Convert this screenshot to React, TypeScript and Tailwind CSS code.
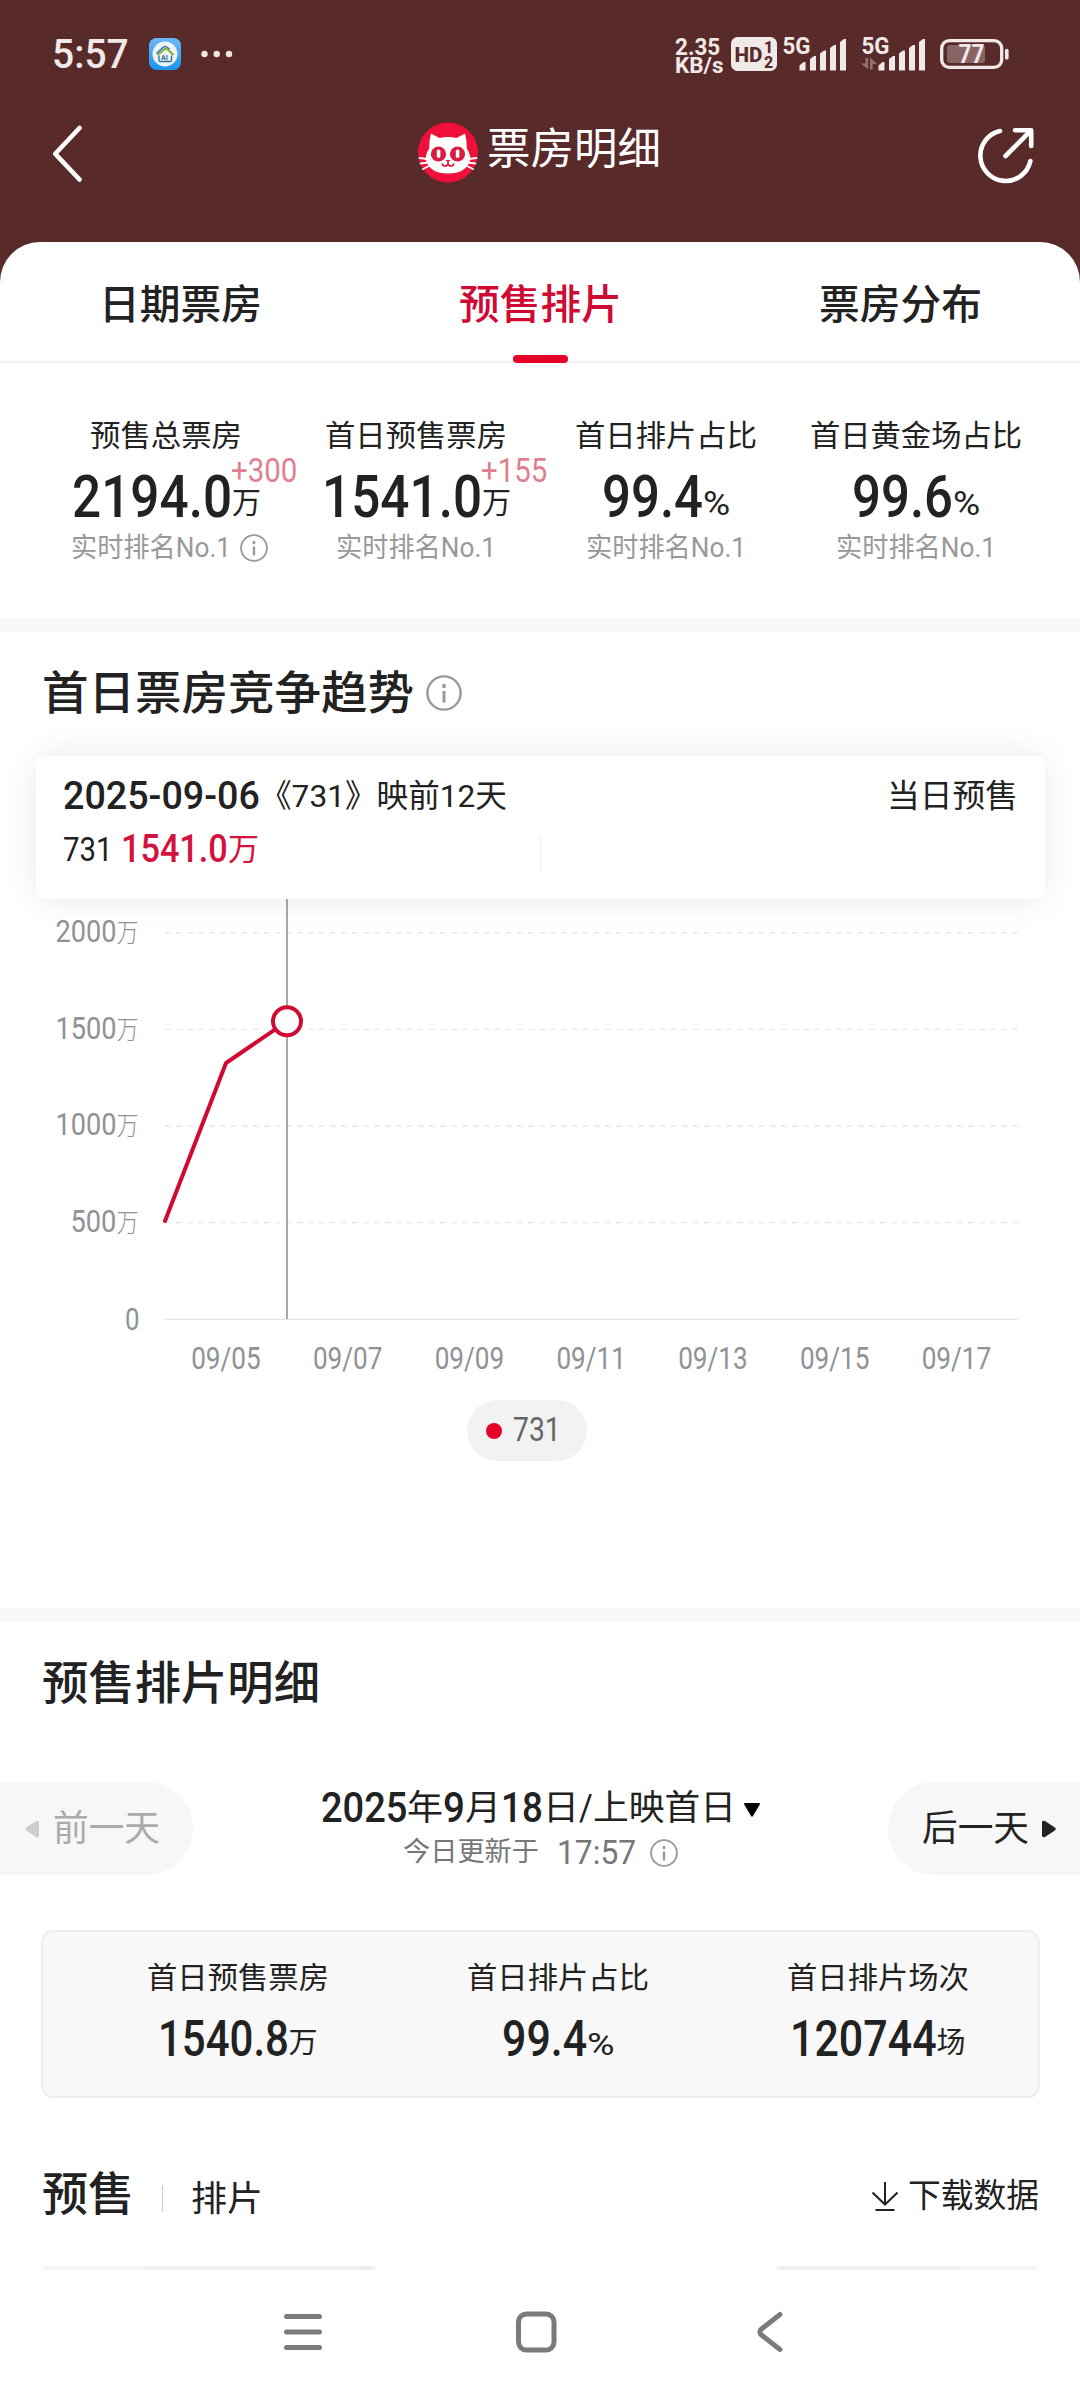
import React, { useLayoutEffect, useRef, useState } from "react";

/* Text squeezed or stretched horizontally so that it fills the width of its box. */
function Fit({ className, children }: { className: string; children: React.ReactNode }) {
  const outer = useRef<HTMLSpanElement>(null);
  const inner = useRef<HTMLSpanElement>(null);
  const [scale, setScale] = useState(1);
  useLayoutEffect(() => {
    if (outer.current && inner.current && inner.current.offsetWidth > 0) {
      setScale(outer.current.clientWidth / inner.current.offsetWidth);
    }
  }, []);
  return (
    <span ref={outer} className={`flex shrink-0 leading-none ${className}`}>
      <span
        ref={inner}
        className="block shrink-0 origin-left whitespace-nowrap"
        style={{ transform: `scaleX(${scale})` }}
      >
        {children}
      </span>
    </span>
  );
}

function Info({ className }: { className: string }) {
  return (
    <svg viewBox="0 0 36 36" fill="none" stroke="currentColor" className={`shrink-0 ${className}`}>
      <circle cx="18" cy="18" r="16.6" strokeWidth="2.4" />
      <path d="M18 16v11.5" strokeWidth="3" />
      <path d="M18 9v4" strokeWidth="3.2" />
    </svg>
  );
}

function Signal({ data }: { data?: boolean }) {
  return (
    <svg viewBox="0 -6 66 48" className="h-12 w-[66px] shrink-0 fill-[#f1e8e8]">
      <text x="0.500" y="17.500" fontSize="23" fontWeight="700" textLength="28" lengthAdjust="spacingAndGlyphs">
        5G
      </text>
      {data && (
        <g className="fill-[#937272]">
          <path d="M4.500 22h2.600v11.500L0 27.500h4.500z" />
          <path d="M9 33.500h2.600V28H16l-7-6.500z" />
        </g>
      )}
      <path d="M17.500 34.500v-5l4-3.500h2v8.500z" />
      <path d="M28 34.500V23l4-3h2v14.500z" />
      <path d="M38 34.500V17.500l4-3h2v20z" />
      <path d="M48 34.500V12l4-3h2v25.500z" />
      <path d="M58 34.500V6l4-3h2v31.500z" />
    </svg>
  );
}

function StatusBar() {
  return (
    <div className="flex h-[108px] items-center text-[#f1e8e8]">
      <Fit className="ml-[52px] w-[77px] text-[41px] font-medium">5:57</Fit>
      <svg viewBox="0 0 32 32" className="ml-5 h-8 w-8">
        <defs>
          <linearGradient id="app" x1="0" y1="0" x2="0" y2="1">
            <stop offset="0" stopColor="#6db9f7" />
            <stop offset="1" stopColor="#1b95ee" />
          </linearGradient>
        </defs>
        <rect width="32" height="32" rx="7.500" fill="url(#app)" />
        <circle cx="16" cy="16" r="12.500" fill="#eef4f4" />
        <path d="M7.500 15.500l7-6.500q1.500-1 3 0l3 2.200" fill="none" stroke="#2a6fa0" strokeWidth="1.500" />
        <path d="M8.500 17l7-5.800q1.500-1 3 0L24.500 17" fill="none" stroke="#7fae3c" strokeWidth="2" />
        <path d="M10 17.500v5q0 1 1 1h10.500q1 0 1-1v-5" fill="none" stroke="#2a6fa0" strokeWidth="1.300" />
        <text x="12" y="21.800" fontSize="7" fontWeight="700" fill="#2a6fa0">
          AI
        </text>
      </svg>
      <svg viewBox="0 0 32 8" className="ml-5 h-2 w-8 fill-[#f1e8e8]">
        <circle cx="3.500" cy="4" r="3.200" />
        <circle cx="15.700" cy="4" r="3.200" />
        <circle cx="28" cy="4" r="3.200" />
      </svg>
      <div className="ml-[442px] flex flex-col gap-px pt-1">
        <Fit className="h-[18px] w-[45px] items-center text-[24px] font-bold">2.35</Fit>
        <Fit className="h-[18px] w-[49px] items-center text-[22px] font-bold">KB/s</Fit>
      </div>
      <svg viewBox="0 0 46 34" className="ml-[7px] h-[34px] w-[46px] shrink-0">
        <rect width="46" height="34" rx="6.500" fill="#f1e8e8" />
        <g fill="#582a2a" fontWeight="800">
          <text x="3.500" y="24.500" fontSize="21" textLength="28" lengthAdjust="spacingAndGlyphs">
            HD
          </text>
          <text x="33" y="15.500" fontSize="16">
            1
          </text>
          <text x="33" y="30.500" fontSize="16">
            2
          </text>
        </g>
      </svg>
      <div className="ml-[5px] flex gap-[13px]">
        <Signal />
        <Signal data />
      </div>
      <svg viewBox="0 0 70 32" className="ml-[12.500px] h-8 w-[70px] shrink-0">
        <rect x="1.700" y="2.700" width="60" height="26.600" rx="7.500" fill="none" stroke="#f1e8e8" strokeWidth="3.300" />
        <rect x="7" y="7" width="38" height="18" rx="3" fill="#886464" />
        <path d="M66.800 12.500v7.500" stroke="#f1e8e8" strokeWidth="3.600" strokeLinecap="round" />
        <text x="18.500" y="25" fontSize="25.500" fontWeight="700" fill="#f1e8e8" textLength="26" lengthAdjust="spacingAndGlyphs">
          77
        </text>
      </svg>
    </div>
  );
}

function CatLogo() {
  return (
    <svg viewBox="0 0 60 60" className="h-[61px] w-[60px]">
      <circle cx="30" cy="30" r="30" fill="#ee1039" />
      <path
        d="M13 11l8.500 4.500q8.500-2 17 0L47 11q2 7 1.800 15Q53 32 52 38q-4 13-22 13T8 38q-1-6 3.200-12Q11 18 13 11z"
        fill="#fff"
      />
      <g stroke="#fff" strokeWidth="1.800" strokeLinecap="round">
        <path d="M1.500 35.500l8 1M2.500 41l8-1M5 46.500l7-3.500M58.500 35.500l-8 1M57.500 41l-8-1M55 46.500L48 43" />
      </g>
      <circle cx="20.500" cy="31.500" r="7.600" fill="#d81c40" />
      <circle cx="39.500" cy="31.500" r="7.600" fill="#d81c40" />
      <rect x="18.800" y="27" width="3.600" height="8.500" rx="1.800" fill="#fff" />
      <rect x="37.800" y="27" width="3.600" height="8.500" rx="1.800" fill="#fff" />
      <path d="M27.500 37.500h5L30 40z" fill="#d81c40" />
      <path d="M30 39.500v2q-1.500 2.500-3.500 2t-2.500-2.500M30 41.500q1.500 2.500 3.500 2t2.500-2.500" fill="none" stroke="#d81c40" strokeWidth="1.700" />
    </svg>
  );
}

function TitleBar() {
  return (
    <div className="flex h-[134px] items-start pt-[14px] text-white">
      <svg viewBox="0 0 30 58" fill="none" stroke="currentColor" className="ml-[52px] mt-[3px] h-[58px] w-[30px]">
        <path d="M27.500 3L3.300 28.800 27.500 54.500" strokeWidth="4.600" strokeLinecap="round" strokeLinejoin="round" />
      </svg>
      <div className="ml-[336px]">
        <CatLogo />
      </div>
      <Fit className="ml-[9px] mt-[6px] w-[174px] text-[43px]">票房明细</Fit>
      <svg viewBox="0 0 58 58" fill="none" stroke="currentColor" className="ml-[315px] mt-[4px] h-[58px] w-[58px]">
        <g strokeWidth="4.600" strokeLinecap="round" strokeLinejoin="round">
          <path d="M24 5A25.300 25.300 0 1 0 54.400 35" />
          <path d="M29.500 30L55 4.500M39 4.300h16.200V20" />
        </g>
      </svg>
    </div>
  );
}

function Tabs() {
  return (
    <div className="grid h-[121px] grid-cols-3 border-b-2 border-[#f1f1f1] text-[40.500px] font-medium text-[#222]">
      <div className="flex justify-center pt-[43px]">
        <Fit className="w-[163px]">日期票房</Fit>
      </div>
      <div className="relative flex justify-center pt-[43px] text-[#cf0a33]">
        <Fit className="w-[163px]">预售排片</Fit>
        <div className="absolute -bottom-0.5 left-[153px] h-2 w-[55px] rounded-full bg-[#e60029]" />
      </div>
      <div className="flex justify-center pt-[43px]">
        <Fit className="w-[163px]">票房分布</Fit>
      </div>
    </div>
  );
}

type Stat = { label: string; labelW: string; value: string; valueW: string; unit: string; unitW: string; delta?: string; info?: boolean };

const stats: Stat[] = [
  { label: "预售总票房", labelW: "w-[152px]", value: "2194.0", valueW: "w-[160px]", unit: "万", unitW: "w-[29px] text-[30px]", delta: "+300", info: true },
  { label: "首日预售票房", labelW: "w-[182px]", value: "1541.0", valueW: "w-[160px]", unit: "万", unitW: "w-[29px] text-[30px]", delta: "+155" },
  { label: "首日排片占比", labelW: "w-[182px]", value: "99.4", valueW: "w-[101px]", unit: "%", unitW: "w-[27px] text-[33px]" },
  { label: "首日黄金场占比", labelW: "w-[212px]", value: "99.6", valueW: "w-[101px]", unit: "%", unitW: "w-[27px] text-[33px]" },
];

function Stats() {
  return (
    <div className="flex h-[255px] pl-[41px] pt-[58px] text-[#222]">
      {stats.map((s) => (
        <div key={s.label} className="flex w-[250px] flex-col items-center">
          <Fit className={`text-[30px] ${s.labelW}`}>{s.label}</Fit>
          <div className="relative mt-[16px] flex h-[58px] items-center">
            <Fit className={`text-[59px] font-medium ${s.valueW}`}>{s.value}</Fit>
            <Fit className={`mt-3.5 ${s.unitW}`}>{s.unit}</Fit>
            {s.delta && (
              <Fit className="absolute left-[159px] top-[-13px] w-[66px] text-[33px] text-[#e07f91]">{s.delta}</Fit>
            )}
          </div>
          <div className="mt-[9px] flex h-[28px] items-center text-[27.500px] text-[#999]">
            {s.info && <span className="w-1.5" />}
            <Fit className="w-[160px]">实时排名No.1</Fit>
            {s.info && <Info className="ml-[9px] h-7 w-7" />}
          </div>
        </div>
      ))}
    </div>
  );
}

const yLabels: [string, number][] = [
  ["2000", 83],
  ["1500", 83],
  ["1000", 83],
  ["500", 68],
];
const days = ["09/05", "09/07", "09/09", "09/11", "09/13", "09/15", "09/17"];

function Chart() {
  return (
    <svg viewBox="0 899 1080 486" className="block h-[486px] w-full">
      {yLabels.map(([label, w], i) => (
        <g key={label}>
          <text x={138.5 - w} y={942 + i * 96.6} fontSize="32" fill="#8f9296" textLength={w} lengthAdjust="spacingAndGlyphs">
            {label}
            <tspan fontSize="26" fontWeight="300">
              万
            </tspan>
          </text>
          <path d={`M165 ${932.8 + i * 96.6}H1017.500`} stroke="#e9e9e9" strokeWidth="1.400" strokeDasharray="5.6 5.4" />
        </g>
      ))}
      <text x="125" y="1330" fontSize="32" fill="#8f9296" textLength="14.500" lengthAdjust="spacingAndGlyphs">
        0
      </text>
      <path d="M165 1319.400H1017.500" stroke="#e6e6e6" strokeWidth="1.400" />
      <path d="M287 899V1319" stroke="#8c8c8c" strokeWidth="1.500" />
      <path d="M165 1221L226 1063L287 1021.300" fill="none" stroke="#cf0a33" strokeWidth="4" strokeLinecap="round" strokeLinejoin="round" />
      <circle cx="287" cy="1021.300" r="14" fill="#fff" stroke="#cf0a33" strokeWidth="4" />
      {days.map((d, i) => (
        <text key={d} x={191.2 + i * 121.75} y="1368.500" fontSize="32" fill="#8f9296" textLength="69.500" lengthAdjust="spacingAndGlyphs">
          {d}
        </text>
      ))}
    </svg>
  );
}

function Trend() {
  return (
    <section className="h-[976px] text-[#222]">
      <div className="flex h-[124px] items-center pb-[3px]">
        <Fit className="ml-[42px] w-[372px] text-[46px] font-medium">首日票房竞争趋势</Fit>
        <Info className="ml-[12px] h-9 w-9 text-[#999]" />
      </div>
      <div className="relative z-10 ml-9 mr-[35px] h-[143px] rounded-lg bg-white shadow-[0_0_36px_rgba(0,0,0,0.09)]">
        <div className="flex h-[75px] items-center pl-[27px] pr-[27px] pt-[5px]">
          <Fit className="w-[197px] text-[39px] font-medium">2025-09-06</Fit>
          <Fit className="w-[247px] text-[32px]">《731》映前12天</Fit>
          <span className="grow" />
          <Fit className="w-[131px] text-[32px]">当日预售</Fit>
        </div>
        <div className="flex h-9 items-center pl-[27px]">
          <Fit className="w-[50px] text-[33px]">731</Fit>
          <Fit className="ml-[8px] w-[107px] text-[39px] font-medium text-[#d31240]">1541.0</Fit>
          <Fit className="w-[31px] text-[31px] text-[#d31240]">万</Fit>
          <span className="ml-[281px] mt-1 h-[38px] w-px shrink-0 self-start bg-[#eee]" />
        </div>
      </div>
      <Chart />
      <div className="ml-[467px] mt-[15px] flex h-[61px] w-[120px] items-center rounded-full bg-[#f2f2f2]">
        <span className="ml-[19px] size-4 rounded-full bg-[#e60029]" />
        <Fit className="-mt-0.5 ml-[11px] w-[48px] text-[33px] text-[#666]">731</Fit>
      </div>
    </section>
  );
}

function DayPicker() {
  return (
    <div className="flex h-[93px] justify-between text-[#222]">
      <div className="flex w-[193px] items-center rounded-r-full bg-[#f7f7f7] text-[#aaa]">
        <svg viewBox="0 0 14 18" className="ml-[25px] h-[18px] w-[14px] fill-[#ccc]">
          <path d="M14 2v14q-1 2-3 1L.800 10.200q-1-1.200 0-2.400L11 1q2-1 3 1z" />
        </svg>
        <Fit className="ml-[14px] w-[107px] text-[36px]">前一天</Fit>
      </div>
      <div className="flex flex-col pr-px">
        <div className="flex h-[52px] items-center">
          <Fit className="w-[86px] text-[42px] font-medium">2025</Fit>
          <Fit className="w-[36px] text-[35px]">年</Fit>
          <Fit className="w-[22px] text-[42px] font-medium">9</Fit>
          <Fit className="w-[36px] text-[35px]">月</Fit>
          <Fit className="w-[42px] text-[42px] font-medium">18</Fit>
          <Fit className="w-[36px] text-[35px]">日</Fit>
          <Fit className="w-[14px] text-[36px]">/</Fit>
          <Fit className="w-[143px] text-[35px]">上映首日</Fit>
          <svg viewBox="0 0 16 14" className="ml-[8px] mt-1 h-[14px] w-4">
            <path d="M.500 0h15q.800 1 0 2L9 13q-1 1.500-2 0L.500 2q-.800-1 0-2z" />
          </svg>
        </div>
        <div className="flex h-[37px] items-center pl-[82px] text-[#777]">
          <Fit className="w-[136px] text-[27px]">今日更新于</Fit>
          <Fit className="ml-[18px] w-[79px] text-[33px]">17:57</Fit>
          <Info className="ml-[14px] h-7 w-7 text-[#999]" />
        </div>
      </div>
      <div className="flex w-[192px] items-center rounded-l-full bg-[#f7f7f7]">
        <Fit className="ml-[34px] w-[107px] text-[36px]">后一天</Fit>
        <svg viewBox="0 0 14 18" className="ml-[13px] h-[18px] w-[14px] fill-[#222]">
          <path d="M0 2v14q1 2 3 1l10.200-6.800q1-1.200 0-2.400L3 1Q1-0 0 2z" />
        </svg>
      </div>
    </div>
  );
}

const summary = [
  { label: "首日预售票房", value: "1540.8", valueW: "w-[131px]", unit: "万", unitW: "w-[29px] text-[29px]" },
  { label: "首日排片占比", value: "99.4", valueW: "w-[85px]", unit: "%", unitW: "w-[27px] text-[32px]" },
  { label: "首日排片场次", value: "120744", valueW: "w-[147px]", unit: "场", unitW: "w-[29px] text-[29px]" },
];

function Detail() {
  return (
    <section className="text-[#222]">
      <div className="flex h-[160px] pt-[38px]">
        <Fit className="ml-[42px] w-[278px] text-[46px] font-medium">预售排片明细</Fit>
      </div>
      <DayPicker />
      <div className="ml-[41px] mr-[40px] mt-[55px] flex h-[168px] rounded-xl border-2 border-[#eee] bg-[#f8f8f8] pl-[34.500px]">
        {summary.map((s) => (
          <div key={s.label} className="flex w-[320px] flex-col items-center pt-[31px]">
            <Fit className="w-[182px] text-[30px]">{s.label}</Fit>
            <div className="mt-[20px] flex h-[52px] items-center">
              <Fit className={`text-[50px] font-medium ${s.valueW}`}>{s.value}</Fit>
              <Fit className={`mt-[9px] ${s.unitW}`}>{s.unit}</Fit>
            </div>
          </div>
        ))}
      </div>
      <div className="flex h-[168px] items-start pt-[73px]">
        <Fit className="ml-[42px] w-[92px] text-[46px] font-medium">预售</Fit>
        <span className="ml-[28px] mt-[14px] h-[27px] w-px bg-[#ccc]" />
        <Fit className="ml-[28px] mt-[11px] w-[72px] text-[35px]">排片</Fit>
        <span className="grow" />
        <svg viewBox="0 0 28 32" fill="none" stroke="currentColor" className="mt-[9px] h-8 w-7">
          <path d="M14 2v22.500M1.500 12.500L14 24.500l12.500-12M4.500 30h19" strokeWidth="2" />
        </svg>
        <Fit className="ml-[9px] mr-[41px] mt-[8px] w-[131px] text-[33px]">下载数据</Fit>
      </div>
      <div className="flex h-1 justify-between px-[42px]">
        <span className="w-[334px] rounded-t-md bg-linear-to-r from-[#f5f5f5] to-[#eee]" />
        <span className="w-[262px] rounded-t-md bg-linear-to-r from-[#eee] to-[#f5f5f5]" />
      </div>
    </section>
  );
}

function SystemNav() {
  return (
    <nav className="flex h-[130px] items-start bg-white pt-10">
      <svg viewBox="0 0 40 44" className="ml-[283px] h-11 w-10" stroke="#7b7b7b" strokeWidth="5" strokeLinecap="round">
        <path d="M3.500 6.500h33M3.500 22h33M3.500 37.500h33" />
      </svg>
      <svg viewBox="0 0 44 44" className="ml-[191px] h-11 w-11" fill="none" stroke="#7b7b7b" strokeWidth="5">
        <rect x="4.500" y="4" width="35.500" height="36" rx="8" />
      </svg>
      <svg viewBox="0 0 30 44" className="ml-[197px] h-11 w-[30px]" fill="none" stroke="#7b7b7b" strokeWidth="5" strokeLinecap="round">
        <path d="M25 4.500L6.500 19q-3.500 3 0 6L25 39.500" />
      </svg>
    </nav>
  );
}

export default function App() {
  return (
    <div className="h-[2400px] w-[1080px] overflow-hidden bg-white font-['Roboto','Noto_Sans_CJK_SC',sans-serif]">
      <header className="h-[242px] bg-[#582a2a]">
        <StatusBar />
        <TitleBar />
      </header>
      <div className="bg-[#582a2a]">
        <div className="rounded-t-[40px] bg-white">
          <Tabs />
          <Stats />
        </div>
      </div>
      <div className="h-3.5 bg-[#f7f7f7]" />
      <Trend />
      <div className="h-3.5 bg-[#f7f7f7]" />
      <Detail />
      <SystemNav />
    </div>
  );
}
